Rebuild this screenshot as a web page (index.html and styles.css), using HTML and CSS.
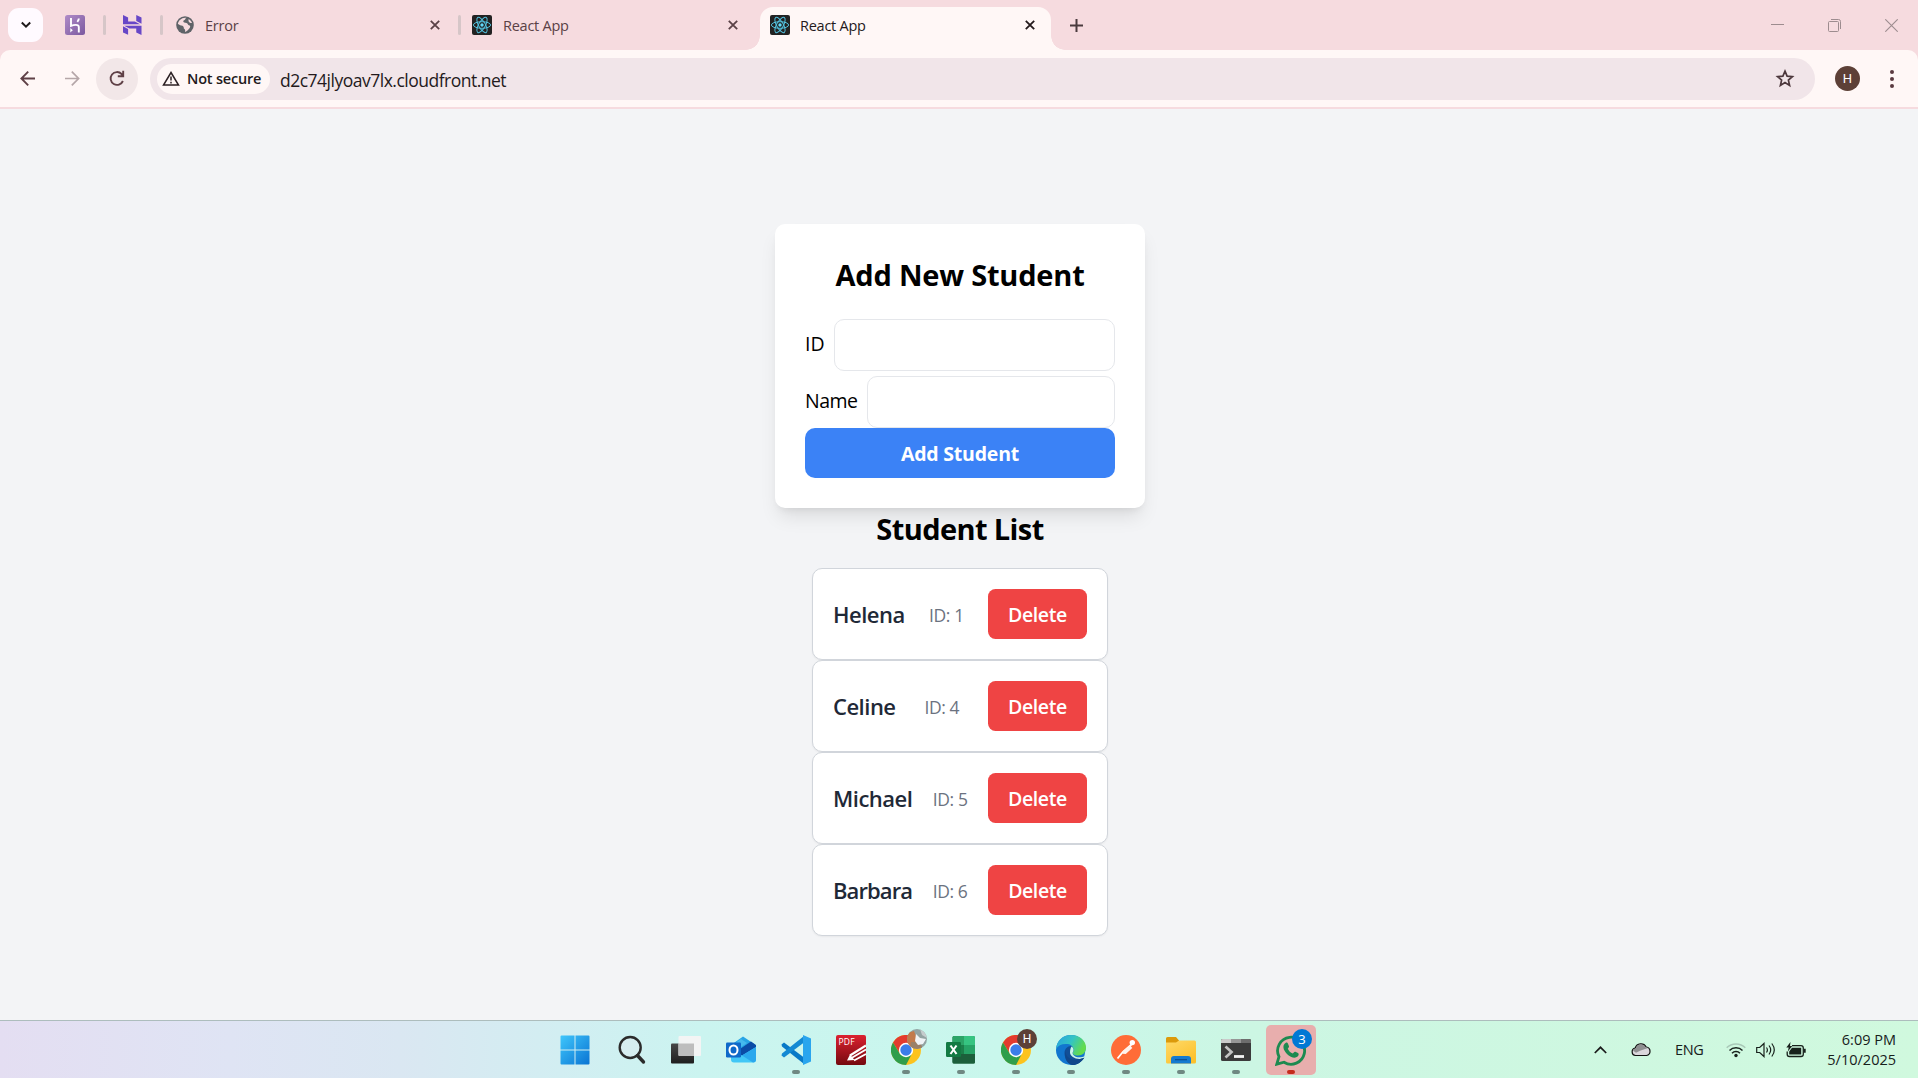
FILE: index.html
```html
<!DOCTYPE html>
<html lang="en">
<head>
<meta charset="utf-8">
<title>React App</title>
<link rel="stylesheet" href="styles.css">
</head>
<body>
<svg class="defs" width="0" height="0" aria-hidden="true">
  <symbol id="react" viewBox="0 0 20 20">
    <rect width="20" height="20" rx="2" fill="#222222"/>
    <g fill="none" stroke="#53c1de" stroke-width="1">
      <ellipse cx="10" cy="10" rx="8.6" ry="3.3"/>
      <ellipse cx="10" cy="10" rx="8.6" ry="3.3" transform="rotate(60 10 10)"/>
      <ellipse cx="10" cy="10" rx="8.6" ry="3.3" transform="rotate(120 10 10)"/>
    </g>
    <circle cx="10" cy="10" r="1.7" fill="#61dafb"/>
  </symbol>
  <symbol id="close" viewBox="0 0 10 10"><path d="M.8.8l8.4 8.4M9.2.8L.8 9.2" fill="none" stroke="currentColor" stroke-width="1.8"/></symbol>
  <symbol id="chrome" viewBox="0 0 30 30">
    <circle cx="15" cy="15" r="15" fill="#fcc31e"/>
    <path d="M8.800 18.500L2 7.500A15 15 0 0 1 28.300 8H15z" fill="#e33b2e"/>
    <path d="M2 7.500l7 11.500 6 3 5.500-2.500L15 30A15 15 0 0 1 2 7.500z" fill="#2f9e4b"/>
    <circle cx="15" cy="15" r="7.2" fill="#fff"/>
    <circle cx="15" cy="15" r="5.7" fill="#3b7de9"/>
  </symbol>
</svg>
<div class="screen">
  <header class="tabstrip">
    <button class="tab-search" aria-label="Search tabs"><svg width="12" height="8" viewBox="0 0 12 8"><path d="M1.8 1.5L6 5.7l4.2-4.2" fill="none" stroke="#1f1a1b" stroke-width="2"/></svg></button>
    <span class="pinned pinned-first"><svg width="20" height="20" viewBox="0 0 20 20"><defs><linearGradient id="hk" x1="0" y1="0" x2="1" y2="1"><stop stop-color="#b08cc8"/><stop offset="1" stop-color="#7b589f"/></linearGradient></defs><rect width="20" height="20" rx="2.5" fill="url(#hk)"/><path d="M6 3v7.800c2.200-.9 7.800-2 7.800 1.200v5.500M13.800 3.500c0 1.400-.6 2.300-1.500 3.300" fill="none" stroke="#fff" stroke-width="1.900"/><path d="M5.300 13v4.500l2.500-2.250z" fill="#fff"/></svg></span>
    <i class="sep"></i>
    <span class="pinned pinned-second"><svg width="18.500" height="20" viewBox="1.800 0 20.400 24" preserveAspectRatio="none"><path d="M16.415 0v7.160l5.785 3.384V2.949zM1.800 0v11.237h18.815L14.890 7.860l-7.457.003V3.125zM16.415 20.894v-4.778l-7.514.005-5.820-3.197 19.119.090V24zM1.800 13.551v7.343l5.633 2.949v-6.988z" fill="#6747c7"/></svg></span>
    <i class="sep"></i>
    <div class="tab tab-error">
      <svg width="18" height="18" viewBox="0 0 18 18"><circle cx="9" cy="9" r="8.800" fill="#5f6368"/><path d="M10.500 1.800c-1.400.4-.8 1.800-2 2.300-1.500.5-1.600 2-.3 2.500 1.500.6 3.300.2 3.800 1.800.2.800 1.700.5 2.100 1.500.6 1.600-2.300 4.500-5 6.200.3-1.800-.1-2.800-1.300-3.500.3-1.800-.6-3-2.600-3.200C3.700 9.200 2.800 8.300 1.900 7.900 2.300 4.400 6 1 10.500 1.800zM12.600 3c1.500.8 3 2.500 3.400 4-1.500.2-3.300-.6-3.500-2z" fill="#f6dbdf"/></svg>
      <span class="tab-name">Error</span><svg class="x" width="10" height="10"><use href="#close"/></svg>
    </div>
    <i class="sep"></i>
    <div class="tab tab-react">
      <svg width="20" height="20"><use href="#react"/></svg>
      <span class="tab-name">React App</span><svg class="x" width="10" height="10"><use href="#close"/></svg>
    </div>
    <div class="tab tab-active">
      <svg width="20" height="20"><use href="#react"/></svg>
      <span class="tab-name">React App</span><svg class="x" width="10" height="10"><use href="#close"/></svg>
    </div>
    <svg class="newtab" width="13" height="13" viewBox="0 0 13 13"><path d="M6.500 0v13M0 6.500h13" stroke="#4a3b3e" stroke-width="2"/></svg>
    <div class="winctl">
      <svg width="13" height="13" viewBox="0 0 13 13"><path d="M0 5.500h13" stroke="#9d8c8f"/></svg>
      <svg width="13" height="13" viewBox="0 0 13 13" fill="none" stroke="#9d8c8f"><rect x=".5" y="2.500" width="10" height="10" rx="1"/><path d="M3 .5h7.500a2 2 0 0 1 2 2V10"/></svg>
      <svg width="13" height="13" viewBox="0 0 13 13"><path d="M.3.3l12.400 12.400M12.700.3L.3 12.700" stroke="#9d8c8f" stroke-width="1.100"/></svg>
    </div>
  </header>
  <div class="toolbar-wrap">
  <nav class="toolbar">
    <svg class="back" width="15" height="15" viewBox="0 0 15 15"><path d="M15 7.500H1.500M8.200.7L1.400 7.500l6.800 6.800" fill="none" stroke="#5f4046" stroke-width="1.900"/></svg>
    <svg class="fwd" width="15" height="15" viewBox="0 0 15 15"><path d="M0 7.500h13.500M6.800.7l6.800 6.800-6.800 6.800" fill="none" stroke="#b5a6a8" stroke-width="1.700"/></svg>
    <span class="reload"><svg width="16" height="17" viewBox="0 0 16 17"><path d="M13.900 11A6.400 6.400 0 1 1 12.600 4L14 5.500M14.200.8v5.400H8.800" fill="none" stroke="#5f4046" stroke-width="1.900"/></svg></span>
    <div class="omnibox">
      <span class="chip"><svg width="18" height="15" viewBox="0 0 18 15"><path d="M9 1.500L16.500 14h-15z" fill="none" stroke="#2c2023" stroke-width="1.500"/><path d="M9 5.500v4M9 10.800v1.600" stroke="#2c2023" stroke-width="1.500"/></svg><b>Not secure</b></span>
      <span class="url">d2c74jlyoav7lx.cloudfront.net</span>
      <svg class="star" width="20" height="19" viewBox="0 0 20 19"><path d="M10 2.200l2.100 5 5.300.4-4 3.500 1.200 5.300-4.600-2.800-4.600 2.800 1.200-5.300-4-3.500 5.300-.4z" fill="none" stroke="#4c373c" stroke-width="1.700"/></svg>
    </div>
    <span class="avatar">H</span>
    <span class="menu"><i></i><i></i><i></i></span>
  </nav>
  </div>

  <main class="page">
    <form class="form">
      <h2 class="title form-title">Add New Student</h2>
      <div class="field"><label class="lbl-id">ID</label><input aria-label="ID"></div>
      <div class="field"><label class="lbl-name">Name</label><input aria-label="Name"></div>
      <button class="add" type="button">Add Student</button>
    </form>
    <h2 class="title list-title">Student List</h2>
    <ul class="list">
      <li><span class="name">Helena</span><span class="sid">ID: 1</span><button class="del">Delete</button></li>
      <li><span class="name">Celine</span><span class="sid">ID: 4</span><button class="del">Delete</button></li>
      <li><span class="name">Michael</span><span class="sid">ID: 5</span><button class="del">Delete</button></li>
      <li><span class="name tight">Barbara</span><span class="sid">ID: 6</span><button class="del">Delete</button></li>
    </ul>
  </main>

  <footer class="taskbar">
    <div class="apps">
      <span class="app start"><svg width="30" height="30" viewBox="0 0 30 30"><defs><linearGradient id="win" x1="0" y1="0" x2="1" y2="1"><stop stop-color="#3fc6fb"/><stop offset="1" stop-color="#0a74d3"/></linearGradient></defs><path d="M1.500.5h13v14h-14v-13a1 1 0 0 1 1-1zM15.500.5h13a1 1 0 0 1 1 1v13h-14zM.5 15.500h14v14h-13a1 1 0 0 1-1-1zM15.500 15.500h14v13a1 1 0 0 1-1 1h-13z" fill="url(#win)"/></svg></span>
      <span class="app"><svg width="30" height="30" viewBox="0 0 30 30"><circle cx="14.200" cy="12.500" r="10.500" fill="#dcebf0" fill-opacity=".6" stroke="#2b2b2b" stroke-width="2.400"/><path d="M21.500 20.500l6 6.500" stroke="#2b2b2b" stroke-width="3.400" stroke-linecap="round"/></svg></span>
      <span class="app"><svg width="30" height="30" viewBox="0 0 30 30"><defs><linearGradient id="tv" x2="0" y2="1"><stop stop-color="#474747"/><stop offset="1" stop-color="#1e1e1e"/></linearGradient></defs><rect y="8.500" width="23" height="20" rx="1" fill="url(#tv)"/><rect x="7.500" y="1" width="22.500" height="20" rx="1" fill="#f3f4f4"/><path d="M7.500 8.500H23V21H8.500a1 1 0 0 1-1-1z" fill="#bdbdbd"/></svg></span>
      <span class="app"><svg width="30" height="30" viewBox="0 0 30 30"><path d="M5 10l12-8.500L29 9.500 17 20z" fill="#28a4e5"/><path d="M7 9.500l8-5.500 6 4-9 6z" fill="#45b9ee"/><path d="M11 16l14-9.500 5 3.500v3L16 22z" fill="#0b4ba6"/><path d="M5 14l11 6.500L30 12v12.500a3 3 0 0 1-3 3H8a3 3 0 0 1-3-3z" fill="#42c7f6"/><path d="M16 20.500L30 12v12.500a3 3 0 0 1-3 3z" fill="#2ba8ed"/><rect y="7.500" width="15" height="15" rx="1.200" fill="#0f69c9"/><ellipse cx="7.500" cy="15" rx="4" ry="4.600" fill="none" stroke="#fff" stroke-width="2"/></svg></span>
      <span class="app run"><svg width="30" height="30" viewBox="0 0 30 30"><path d="M.5 9.500L3 7.500 23 22.500V29L1 11.500z" fill="#0879c7"/><path d="M.5 20.500L3 22.500 23 7.500V1L1 18.500z" fill="#1389d3"/><path d="M22 0l8 3.500v23L22 30z" fill="#29a5ee"/></svg></span>
      <span class="app"><span class="pdf"><svg width="30" height="30" viewBox="0 0 30 30"><g stroke="#fff" fill="none"><path d="M14 20.500L30 10.500" stroke-width="2.200"/><path d="M15.500 23L30 14.500M18 25.500l12-6.500" stroke-width="1.900"/></g><path d="M11 25.500l3-6 4.500 5.500z" fill="#fff"/></svg><em>PDF</em></span></span>
      <span class="app run"><svg width="30" height="30"><use href="#chrome"/></svg><span class="badge photo"><svg width="20" height="20" viewBox="0 0 20 20"><rect width="20" height="20" fill="#93a3a2"/><path d="M0 4l7-2 3 8-2 10H0z" fill="#c27a4c"/><path d="M4 13h9l3 7H3z" fill="#9a8068"/><path d="M9 5l4 4 6 1-3 5-5 1-3-4z" fill="#f0f3f6"/><path d="M13 0l7 3v6l-5-3z" fill="#c5cccd"/></svg></span></span>
      <span class="app run"><svg width="30" height="30" viewBox="0 0 30 30"><rect x="6.500" y="1" width="22.500" height="27.500" rx="1.500" fill="#1f6b43"/><path d="M8 1h10v9H6.500V2.500A1.500 1.500 0 0 1 8 1z" fill="#2ca467"/><path d="M18 1h9.500A1.500 1.500 0 0 1 29 2.500V10H18z" fill="#36c481"/><path d="M6.500 10H18v9H6.500z" fill="#1b7f4a"/><path d="M18 10h11v9H18z" fill="#26a366"/><path d="M6.500 19H29v8a1.500 1.500 0 0 1-1.500 1.500H8A1.500 1.500 0 0 1 6.500 27z" fill="#1c5f3b"/><rect y="7" width="15" height="15" rx="1.200" fill="#137a43"/><path d="M4.500 10.500l6 8.500M10.500 10.500l-6 8.500" stroke="#fff" stroke-width="2.100"/></svg></span>
      <span class="app run"><svg width="30" height="30"><use href="#chrome"/></svg><span class="badge user">H</span></span>
      <span class="app run"><svg width="30" height="30" viewBox="0 0 30 30"><defs><linearGradient id="eg" x2="1" y2=".4"><stop stop-color="#279fe0"/><stop offset=".55" stop-color="#33c4c4"/><stop offset="1" stop-color="#63dc4d"/></linearGradient></defs><circle cx="15" cy="15" r="15" fill="#1276cf"/><path d="M30 12.500L31 24l-3-1z" fill="#caf6ea"/><path d="M0 14C1 5 7 0 15 0c9 0 15 6 15 12.500 0 5-3.500 8-8 8-4 0-5.500-1.700-5.300-2.800C19 14 16.500 9.500 11.500 9 6 8.500 2 10.500 0 14z" fill="url(#eg)"/><path d="M8.500 18c0-4 3-7 6.500-7 2 .8 3.500 4 1.700 6.500-1 3.500 5 6.500 12.300 3.700C26 27 21 30 16.500 30 11.500 29 8.500 23.500 8.500 18z" fill="#114f98"/><path d="M15.500 11.500c2.500 1.500 2.500 4 1.200 6-.8 3.500 6 7 12.700 3.200l.6 0v2l-6.500 1.300c-5 0-9.500-3-9.500-6.500 0-2.500.5-4.500 1.500-6z" fill="#caf6ea"/><path d="M28.500 22.500C25.500 27.500 20.500 30 16.500 30c-7-2-8-9-7-14 0 6 6 12 19 6.500z" fill="#10478b"/></svg></span>
      <span class="app run"><svg width="30" height="30" viewBox="0 0 30 30"><circle cx="15" cy="15" r="15" fill="#ff6c37"/><circle cx="21.300" cy="7.600" r="2.700" fill="#fff"/><path d="M20.500 9.500l-8.500 7.300-5.500 6.700" fill="none" stroke="#fff" stroke-width="1.800"/><path d="M12 16l7-6 2.300 3-6.500 6-3.300-.2z" fill="#fff2ec"/></svg></span>
      <span class="app run"><svg width="30" height="30" viewBox="0 0 30 30"><defs><linearGradient id="fd" x2=".7" y2="1"><stop stop-color="#ffd968"/><stop offset="1" stop-color="#fcc12c"/></linearGradient></defs><path d="M0 8V3.500A1.500 1.500 0 0 1 1.500 2H10l3 3.500V8z" fill="#dc9a0b"/><path d="M0 7.500h10l3-2h15.500A1.500 1.500 0 0 1 30 7v20a1.500 1.500 0 0 1-1.500 1.500h-27A1.500 1.500 0 0 1 0 27z" fill="url(#fd)"/><path d="M5 28.500V24a3 3 0 0 1 3-3h14a3 3 0 0 1 3 3v4.500z" fill="#147bd0"/><path d="M9 24.700h12" stroke="#0a4e91" stroke-width="1.200"/></svg></span>
      <span class="app run"><svg width="30" height="30" viewBox="0 0 30 30"><rect y="4" width="30" height="22" rx="1.500" fill="#3b3b3b"/><path d="M1.500 4H10v4H0V5.500A1.500 1.500 0 0 1 1.500 4z" fill="#cacaca"/><path d="M10 4h10v4H10z" fill="#969696"/><path d="M20 4h8.500A1.500 1.500 0 0 1 30 5.500V8H20z" fill="#6d6d6d"/><path d="M4.500 11.500l6 5.500-6 5.500" fill="none" stroke="#c4c4c4" stroke-width="2.700"/><path d="M13 21.500h10" stroke="#f3f3f3" stroke-width="2.800"/></svg></span>
      <span class="app run wa"><svg width="32" height="32" viewBox="0 0 32 32"><path d="M1.800 30.200L4 22.700A13.500 13.500 0 1 1 9 28.200z" fill="none" stroke="#1d8a50" stroke-width="2.800"/><path d="M10.500 9c1.200-.8 2-.4 2.500.8l1 2.500c.3 1-.9 1.800-1.200 2.500 1 2.300 2.700 3.800 5 4.700.8-.6 1.500-2.200 2.600-1.700l2.600 1.300c1.300.8.6 2.600-.4 3.500-2 1.800-4.700 1.100-6.800.1-3-1.500-5-3.500-6.500-6.500-1-2-1.600-5.300 1.200-7.200z" fill="#1d8a50"/></svg><span class="badge count">3</span></span>
    </div>
    <div class="tray">
      <svg width="13" height="8" viewBox="0 0 13 8"><path d="M.8 7l5.700-5.700L12.200 7" fill="none" stroke="#1b1b1b" stroke-width="1.700"/></svg>
      <svg class="cloud" width="20" height="15" viewBox="0 0 20 15"><path d="M4.500 13.500a3.800 3.800 0 0 1-.3-7.500A6 6 0 0 1 15.200 5a4.300 4.300 0 0 1 .3 8.500z" fill="#dad7dc" stroke="#111" stroke-width="1.200"/><path d="M2 8.500A3 3 0 0 1 4.600 6.600C6 1.500 12.500.5 14.700 5.500L17 6l-8 2.800-4 2z" fill="#8f8f91"/></svg>
      <span class="lang">ENG</span>
      <svg class="wifi" width="20" height="16" viewBox="0 0 20 16" fill="none" stroke-width="1.500"><path d="M.7 5.800a13 13 0 0 1 18.600 0" stroke="#a9c9b8"/><path d="M3.500 8.500a9.200 9.200 0 0 1 13 0M6 11.200a5.600 5.600 0 0 1 8 0" stroke="#18211c"/><circle cx="10" cy="13.500" r="1.700" fill="#18211c"/></svg>
      <svg class="sound" width="20" height="16" viewBox="0 0 20 16" fill="none" stroke="#18211c" stroke-width="1.200"><path d="M.7 5.500h3L8 1.500v13l-4.300-4h-3zM10.500 5.500q1.800 2.500 0 5M13 3.500q3.400 4.500 0 9M15.800 1.500q5 6.500 0 13"/></svg>
      <svg class="battery" width="20" height="16" viewBox="0 0 20 16"><path d="M6 3.700h9a2.300 2.300 0 0 1 2.300 2.300v6.200a2.300 2.300 0 0 1-2.300 2.300H3.500a2.300 2.300 0 0 1-2.300-2.300V9.500" fill="none" stroke="#18211c" stroke-width="1.300"/><path d="M6 5.700h9.200v6.900H3.200V9.500zM18 6.800h1.700v4H18zM4.500 0L.3 5.500h2.400L1.800 9.500 6.300 4H4z" fill="#18211c"/></svg>
      <div class="clock"><span class="time">6:09 PM</span><span class="date">5/10/2025</span></div>
    </div>
  </footer>
</div>
</body>
</html>
```

FILE: styles.css
```css
* { box-sizing: border-box; }
body { margin: 0; font-family: "Open Sans", "Noto Sans", sans-serif; overflow: hidden; }
button, input { font: inherit; border: 0; margin: 0; padding: 0; }
svg { display: block; flex: none; }
.defs { position: absolute; }
.screen { width: 1918px; height: 1078px; display: flex; flex-direction: column; background: #f3f4f6; }

.tabstrip { height: 50px; flex: none; display: flex; align-items: center; background: #f6dbdf; color: #5a4146; font-size: 14.5px; }
.tab-search { width: 35px; height: 34px; margin-left: 8px; border-radius: 11px; background: #fffaff; display: grid; place-items: center; }
.pinned-first { margin-left: 22px; margin-right: 17.500px; }
.pinned-second { margin-left: 17.500px; margin-right: 18px; }
.sep { width: 3px; height: 20px; border-radius: 2px; background: #d6c6c8; flex: none; }
.tab { display: flex; align-items: center; flex: none; }
.tab-name { line-height: 20px; padding-top: 1px; }
.x { margin-left: auto; }
.tab-error { width: 295px; padding-left: 13.500px; padding-right: 17.500px; }
.tab .tab-name { letter-spacing: -.25px; margin-left: 11px; }
.tab-react { width: 299.500px; padding-left: 11.500px; padding-right: 22px; }
.tab-active { position: relative; width: 291px; height: 43px; margin-top: 7px; padding: 0 16px 7px 10px; background: #fff7f6; border-radius: 13px 13px 0 0; color: #241a1c; }
.tab.tab-active .tab-name { margin-left: 10px; }
.tab-active::before, .tab-active::after { content: ""; position: absolute; bottom: 0; width: 14px; height: 14px; }
.tab-active::before { left: -14px; background: radial-gradient(circle at 0 0, #f6dbdf 13.500px, #fff7f6 14px); }
.tab-active::after { right: -14px; background: radial-gradient(circle at 100% 0, #f6dbdf 13.500px, #fff7f6 14px); }
.newtab { margin-left: 18.500px; }
.winctl { margin-left: auto; margin-right: 20px; display: flex; gap: 44px; }

.toolbar-wrap { flex: none; height: 59px; background: #f6dbdf; padding-bottom: 2px; }
.toolbar { height: 57px; display: flex; align-items: center; background: #fff7f6; border-radius: 10px 10px 0 0; }
.back { margin-left: 20px; }
.fwd { margin-left: 30px; }
.reload { width: 42px; height: 42px; margin-left: 16px; border-radius: 50%; background: #f2e7e8; display: grid; place-items: center; }
.omnibox { width: 1665px; height: 42px; margin-left: 12px; border-radius: 21px; background: #f1e5e9; display: flex; align-items: center; padding-left: 7px; padding-right: 20px; }
.chip { width: 113px; height: 30px; border-radius: 15px; background: #fff7f6; display: flex; align-items: center; padding-left: 5px; gap: 7px; color: #241a1c; font-size: 14.500px; white-space: nowrap; }
.chip b { font-weight: 600; letter-spacing: -.2px; }
.url { margin-left: 10px; font-size: 17.500px; letter-spacing: -.500px; color: #241a1c; line-height: 24px; padding-top: 2px; }
.star { margin-left: auto; }
.avatar { width: 25px; height: 25px; border-radius: 50%; margin-left: 20px; background: #5d4037; color: #fff; font: 13px/25px Roboto, sans-serif; text-align: center; }
.menu { margin-left: 30px; display: flex; flex-direction: column; gap: 3px; }
.menu i { width: 4px; height: 4px; border-radius: 50%; background: #5a3a40; }

.page { flex: 1; background: #f3f4f6; padding-top: 115px; display: flex; flex-direction: column; align-items: center; padding-left: 2px; min-height: 0; }
.form { width: 370px; height: 284px; padding: 30px; background: #fff; border-radius: 10px; box-shadow: 0 12px 19px -4px rgba(0,0,0,.1), 0 5px 8px -5px rgba(0,0,0,.1); display: flex; flex-direction: column; }
.title { margin: 0; font-size: 29px; font-weight: 700; color: #000; text-align: center; white-space: nowrap; letter-spacing: -.6px; }
.form-title { height: 65px; line-height: 41px; letter-spacing: -.200px; }
.field { display: flex; align-items: center; gap: 10px; height: 52px; font-size: 19.500px; }
.field label { padding-bottom: 3px; }
.field + .field { margin-top: 5px; }
.field input { flex: 1; min-width: 0; height: 52px; border: 1px solid #e5e7eb; border-radius: 10px; background: #fff; }
.lbl-id { width: 19px; }
.lbl-name { width: 52px; letter-spacing: -.5px; }
.add { height: 50px; flex: none; border-radius: 10px; background: #3b82f6; color: #fff; font-size: 19.500px; font-weight: 700; letter-spacing: -.2px; }
.list-title { height: 60px; line-height: 41px; }
.list { margin: 0; padding: 0; list-style: none; width: 296px; }
.list li { height: 92px; border: 1px solid #d1d5db; border-radius: 10px; background: #fff; padding: 0 20px; display: flex; align-items: center; justify-content: space-between; box-shadow: 0 1px 2px rgba(0,0,0,.05); }
.name { font-size: 22px; font-weight: 600; color: #1f2937; letter-spacing: -.5px; }
.name.tight { letter-spacing: -.9px; }
.sid { font-size: 17.500px; color: #6b7280; font-weight: 400; letter-spacing: -.4px; padding-top: 1px; }
.del { width: 99px; height: 50px; border-radius: 7.500px; background: #ef4444; color: #fff; font-size: 19.500px; font-weight: 600; letter-spacing: -.4px; }

.taskbar { height: 58px; flex: none; display: flex; border-top: 1px solid #adbdbd; background: linear-gradient(90deg, #e4def2 0, #dfe4f4 230px, #dae7f2 400px, #d2eef2 560px, #cbf4f0 700px, #c9f7ec 1000px, #ccf6e3 1250px, #d0f9de 100%); }
.apps { display: flex; margin-left: 547px; }
.app { position: relative; width: 55px; height: 57px; padding-top: 14px; display: flex; justify-content: center; align-items: flex-start; }
.start { width: 56px; padding-right: 1px; }
.run::after { content: ""; position: absolute; left: 24px; bottom: 4px; width: 8px; height: 4px; border-radius: 2px; background: #6f8882; }
.pdf { position: relative; width: 30px; height: 30px; border-radius: 2px; background: linear-gradient(#dc2130, #75090f); overflow: hidden; }
.pdf em { position: absolute; left: 3px; top: 1px; font: 8.500px/11px "Open Sans", sans-serif; color: #fff; letter-spacing: .2px; }
.badge { position: absolute; left: 29px; top: 8px; width: 20px; height: 20px; border-radius: 50%; overflow: hidden; color: #fff; text-align: center; }
.user { background: #5d4037; font: 12px/20px Roboto, sans-serif; }
.wa { z-index: 0; padding-top: 13px; }
.wa::before { content: ""; position: absolute; z-index: -1; left: 3px; top: 4px; width: 50px; height: 50px; border-radius: 5px; background: #e8aead; }
.wa::after { background: #c42b1c; }
.count { left: 29px; background: #0078d4; font-size: 13px; line-height: 20px; }
.tray { margin-left: auto; margin-right: 22px; display: flex; align-items: center; color: #17201b; font-size: 14.500px; white-space: nowrap; }
.cloud { margin-left: 24px; }
.lang { margin-left: 24px; width: 29px; letter-spacing: -.4px; }
.wifi { margin-left: 22px; }
.sound, .battery { margin-left: 10px; }
.clock { width: 78px; margin-left: 12px; display: flex; flex-direction: column; text-align: right; line-height: 20px; letter-spacing: 0; }
```
